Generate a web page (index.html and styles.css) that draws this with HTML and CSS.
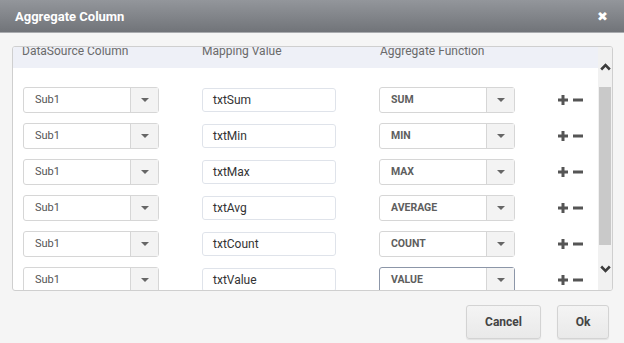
FILE: index.html
```html
<!DOCTYPE html>
<html lang="en">
<head>
  <meta charset="UTF-8">
  <title>Aggregate Column</title>
  <link rel="stylesheet" href="styles.css">
</head>
<body>
  <div class="dialog">
    <!-- title bar -->
    <div class="titlebar">
      <span class="title">Aggregate Column</span>
      <span class="close">&#10006;</span>
    </div>

    <div class="dialog-body">
      <div class="panel">
        <div class="panel-content">
          <div class="head">
            <span>DataSource Column</span>
            <span>Mapping Value</span>
            <span>Aggregate Function</span>
          </div>

          <div class="rows">
            <div class="row">
              <div class="select"><span class="select-text">Sub1</span><span class="select-btn"><i class="caret"></i></span></div>
              <div class="input">txtSum</div>
              <div class="select agg"><span class="select-text">SUM</span><span class="select-btn"><i class="caret"></i></span></div>
              <div class="actions"><svg width="10" height="10" viewBox="0 0 10 10"><path d="M3.5 0h3v3.5H10v3H6.5V10h-3V6.5H0v-3h3.5z" fill="#555"/></svg><svg width="10" height="10" viewBox="0 0 10 10"><rect x="0" y="3.5" width="10" height="3" fill="#555"/></svg></div>
            </div>
            <div class="row">
              <div class="select"><span class="select-text">Sub1</span><span class="select-btn"><i class="caret"></i></span></div>
              <div class="input">txtMin</div>
              <div class="select agg"><span class="select-text">MIN</span><span class="select-btn"><i class="caret"></i></span></div>
              <div class="actions"><svg width="10" height="10" viewBox="0 0 10 10"><path d="M3.5 0h3v3.5H10v3H6.5V10h-3V6.5H0v-3h3.5z" fill="#555"/></svg><svg width="10" height="10" viewBox="0 0 10 10"><rect x="0" y="3.5" width="10" height="3" fill="#555"/></svg></div>
            </div>
            <div class="row">
              <div class="select"><span class="select-text">Sub1</span><span class="select-btn"><i class="caret"></i></span></div>
              <div class="input">txtMax</div>
              <div class="select agg"><span class="select-text">MAX</span><span class="select-btn"><i class="caret"></i></span></div>
              <div class="actions"><svg width="10" height="10" viewBox="0 0 10 10"><path d="M3.5 0h3v3.5H10v3H6.5V10h-3V6.5H0v-3h3.5z" fill="#555"/></svg><svg width="10" height="10" viewBox="0 0 10 10"><rect x="0" y="3.5" width="10" height="3" fill="#555"/></svg></div>
            </div>
            <div class="row">
              <div class="select"><span class="select-text">Sub1</span><span class="select-btn"><i class="caret"></i></span></div>
              <div class="input">txtAvg</div>
              <div class="select agg"><span class="select-text">AVERAGE</span><span class="select-btn"><i class="caret"></i></span></div>
              <div class="actions"><svg width="10" height="10" viewBox="0 0 10 10"><path d="M3.5 0h3v3.5H10v3H6.5V10h-3V6.5H0v-3h3.5z" fill="#555"/></svg><svg width="10" height="10" viewBox="0 0 10 10"><rect x="0" y="3.5" width="10" height="3" fill="#555"/></svg></div>
            </div>
            <div class="row">
              <div class="select"><span class="select-text">Sub1</span><span class="select-btn"><i class="caret"></i></span></div>
              <div class="input">txtCount</div>
              <div class="select agg"><span class="select-text">COUNT</span><span class="select-btn"><i class="caret"></i></span></div>
              <div class="actions"><svg width="10" height="10" viewBox="0 0 10 10"><path d="M3.5 0h3v3.5H10v3H6.5V10h-3V6.5H0v-3h3.5z" fill="#555"/></svg><svg width="10" height="10" viewBox="0 0 10 10"><rect x="0" y="3.5" width="10" height="3" fill="#555"/></svg></div>
            </div>
            <div class="row">
              <div class="select"><span class="select-text">Sub1</span><span class="select-btn"><i class="caret"></i></span></div>
              <div class="input">txtValue</div>
              <div class="select agg focused"><span class="select-text">VALUE</span><span class="select-btn"><i class="caret"></i></span></div>
              <div class="actions"><svg width="10" height="10" viewBox="0 0 10 10"><path d="M3.5 0h3v3.5H10v3H6.5V10h-3V6.5H0v-3h3.5z" fill="#555"/></svg><svg width="10" height="10" viewBox="0 0 10 10"><rect x="0" y="3.5" width="10" height="3" fill="#555"/></svg></div>
            </div>
          </div>
        </div>

        <!-- scrollbar -->
        <div class="scrollbar">
          <div class="sb-up"><svg width="11" height="8" viewBox="0 0 11 8"><path d="M1.2 6.5L5.5 2.2l4.3 4.3" fill="none" stroke="#3c3c3c" stroke-width="2.6"/></svg></div>
          <div class="sb-thumb"></div>
          <div class="sb-down"><svg width="11" height="8" viewBox="0 0 11 8"><path d="M1.2 1.5l4.3 4.3 4.3-4.3" fill="none" stroke="#3c3c3c" stroke-width="2.6"/></svg></div>
        </div>
      </div>

      <div class="footer">
        <button class="btn btn-cancel">Cancel</button>
        <button class="btn btn-ok">Ok</button>
      </div>
    </div>
  </div>
</body>
</html>
```

FILE: styles.css
```css
body {
  margin: 0;
  padding: 0;
  font-family: Roboto, "Liberation Sans", Arial, sans-serif;
  background: #f5f5f5;
}

/* === DIALOG === */
.dialog {
  width: 624px;
  height: 343px;
  background: #f5f5f5;
  overflow: hidden;
}

.titlebar {
  height: 32px;
  display: flex;
  justify-content: space-between;
  align-items: center;
  padding: 0 16px 0 15px;
  background: linear-gradient(#93969b, #717479);
  border-bottom: 1px solid #a9abaf;
}

.title {
  color: #fff;
  font-weight: bold;
  font-size: 13px;
}

.close {
  color: #fff;
  font-size: 13px;
  font-weight: bold;
  font-family: "DejaVu Sans", sans-serif;
}

.dialog-body {
  padding: 13px 11px 0 12px;
}

/* === PANEL WITH ROWS === */
.panel {
  height: 245px;
  box-sizing: border-box;
  border: 1px solid #cfcfcf;
  border-radius: 3px;
  background: #fff;
  display: flex;
  overflow: hidden;
}

.panel-content {
  flex: 1;
  overflow: hidden;
}

.head {
  height: 21px;
  background: #eef0f7;
  display: grid;
  grid-template-columns: 136px 134px 136px;
  column-gap: 44px;
  align-items: start;
  padding-left: 9px;
  font-size: 12px;
  color: #6a6a6a;
  line-height: 14px;
}

.head span {
  margin-top: -3px;
}

.rows {
  padding: 19px 0 0 10px;
  display: flex;
  flex-direction: column;
  gap: 10px;
}

.row {
  display: grid;
  grid-template-columns: 136px 134px 136px auto;
  column-gap: 43px;
  align-items: center;
  height: 26px;
}

.select {
  height: 26px;
  box-sizing: border-box;
  border: 1px solid #d6d6d6;
  border-radius: 3px;
  display: flex;
  background: #fff;
}

.select-text {
  flex: 1;
  padding-left: 11px;
  font-size: 11px;
  color: #555;
  line-height: 24px;
}

.agg .select-text {
  font-weight: bold;
  font-size: 10.5px;
  color: #5e5e5e;
}

.select.focused {
  border-color: #8c96a8;
}

.select-btn {
  width: 27px;
  border-left: 1px solid #d6d6d6;
  background: #f3f3f3;
  display: flex;
  align-items: center;
  justify-content: center;
}

.caret {
  width: 0;
  height: 0;
  border-left: 4px solid transparent;
  border-right: 4px solid transparent;
  border-top: 4px solid #666;
}

.input {
  height: 24px;
  box-sizing: border-box;
  border: 1px solid #dfe3ea;
  border-radius: 3px;
  padding-left: 10px;
  font-size: 12px;
  color: #333;
  line-height: 22px;
}

.actions {
  display: flex;
  gap: 5px;
}

/* === SCROLLBAR === */
.scrollbar {
  width: 14px;
  background: #f1f1f1;
  display: flex;
  flex-direction: column;
  align-items: center;
}

.sb-up {
  height: 40px;
  display: flex;
  align-items: center;
  justify-content: center;
}

.sb-thumb {
  width: 12px;
  height: 158px;
  background: #c9c9c9;
}

.sb-down {
  flex: 1;
  display: flex;
  align-items: center;
  justify-content: center;
  padding-top: 2px;
}

/* === FOOTER BUTTONS === */
.footer {
  display: flex;
  justify-content: flex-end;
  gap: 16px;
  padding: 14px 4px 0 0;
}

.btn {
  height: 34px;
  border: 1px solid #d3d3d3;
  border-radius: 3px;
  background: linear-gradient(#f4f4f4, #e9e9e9);
  font-family: Roboto, "Liberation Sans", Arial, sans-serif;
  font-weight: bold;
  font-size: 12px;
  color: #444;
  box-shadow: 0 1px 1px rgba(0, 0, 0, 0.08);
}

.btn-cancel {
  width: 75px;
}

.btn-ok {
  width: 52px;
}
```
